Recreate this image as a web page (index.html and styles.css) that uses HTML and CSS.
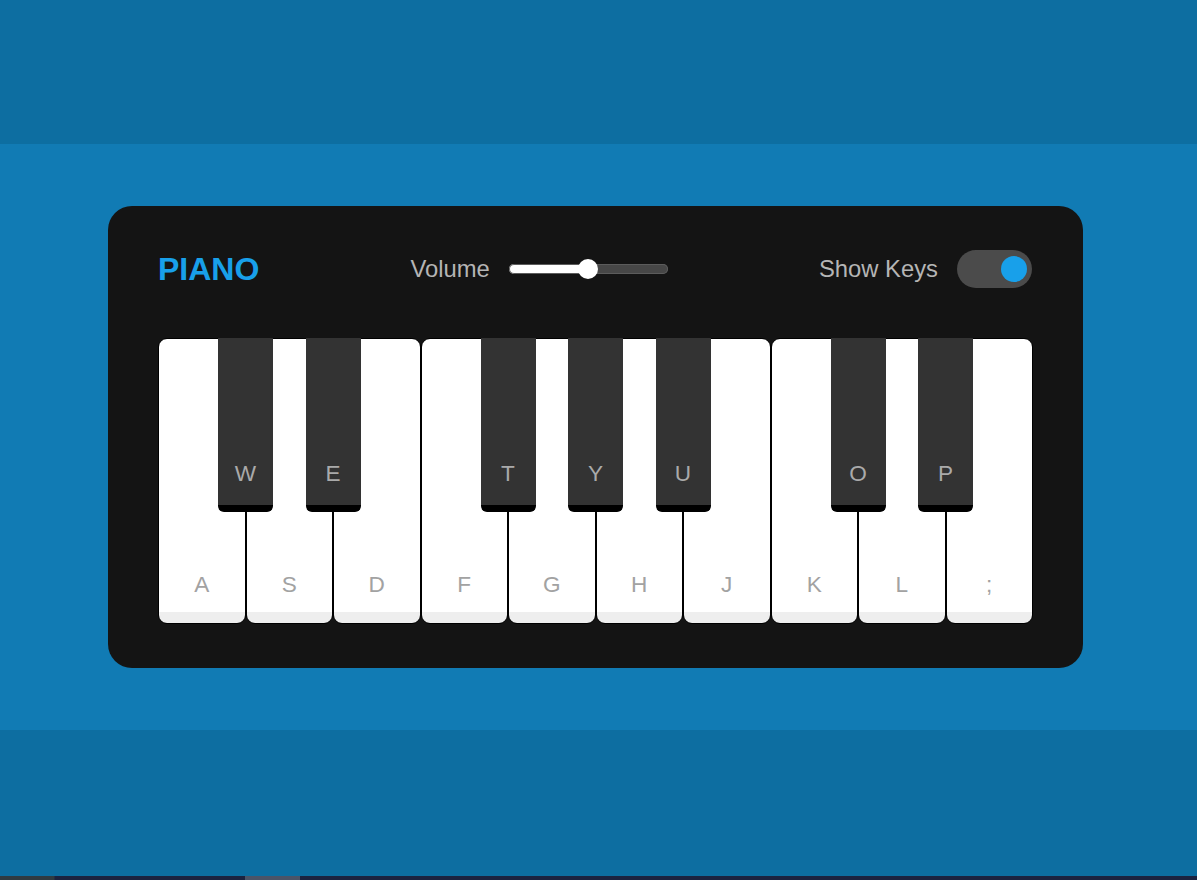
FILE: index.html
```html
<!DOCTYPE html>
<html lang="en">
<head>
<meta charset="utf-8">
<title>Piano</title>
<link rel="stylesheet" href="styles.css">
</head>
<body>
  <div class="band band-top"></div>
  <main class="stage">
    <section class="wrapper">
      <header class="header">
        <h2 class="title">PIANO</h2>
        <div class="column volume-slider">
          <span class="label">Volume</span>
          <input class="range" type="range" min="0" max="1" value="0.5" step="any">
        </div>
        <div class="column keys-checkbox">
          <span class="label">Show Keys</span>
          <input class="toggle" type="checkbox" checked>
        </div>
      </header>
      <ul class="piano-keys">
        <li class="key white"><span>A</span></li>
        <li class="key black"><span>W</span></li>
        <li class="key white"><span>S</span></li>
        <li class="key black"><span>E</span></li>
        <li class="key white"><span>D</span></li>
        <li class="key white"><span>F</span></li>
        <li class="key black"><span>T</span></li>
        <li class="key white"><span>G</span></li>
        <li class="key black"><span>Y</span></li>
        <li class="key white"><span>H</span></li>
        <li class="key black"><span>U</span></li>
        <li class="key white"><span>J</span></li>
        <li class="key white"><span>K</span></li>
        <li class="key black"><span>O</span></li>
        <li class="key white"><span>L</span></li>
        <li class="key black"><span>P</span></li>
        <li class="key white"><span>;</span></li>
      </ul>
    </section>
  </main>
  <div class="band band-bottom"></div>
  <div class="taskbar"></div>
</body>
</html>
```

FILE: styles.css
```css
* {
  box-sizing: border-box;
}

html, body {
  margin: 0;
  padding: 0;
}

body {
  width: 1197px;
  height: 880px;
  overflow: hidden;
  font-family: "Liberation Sans", Arial, sans-serif;
  background: #0d6ea1;
}

.band {
  background: #0d6ea1;
}

.band-top {
  height: 144px;
}

.band-bottom {
  height: 146px;
}

.taskbar {
  height: 4px;
  background: linear-gradient(to right,
    #2f3b42 0, #2f3b42 54px,
    #1b2340 55px, #1b2340 245px,
    #4a5468 245px, #4a5468 300px,
    #1b2340 300px, #1b2340 100%);
}

.stage {
  height: 586px;
  background: #117bb4;
  display: flex;
  align-items: center;
  justify-content: center;
  padding-right: 6px;
}

.wrapper {
  width: 975px;
  padding: 44px 50px 44px 50px;
  border-radius: 24px;
  background: #141414;
}

.header {
  height: 38px;
  padding: 0 1px;
  display: flex;
  align-items: center;
  justify-content: space-between;
  color: #b2b2b2;
}

.title {
  margin: 0 0 0 -1px;
  font-size: 32px;
  font-weight: 700;
  color: #18a0ea;
  line-height: 1;
}

.column {
  display: flex;
  align-items: center;
}

.label {
  font-size: 23.8px;
  margin-right: 19px;
  color: #b5b5b5;
}

.range {
  -webkit-appearance: none;
  appearance: none;
  margin: 0;
  width: 159px;
  height: 10px;
  border-radius: 6px;
  background: linear-gradient(to right, #fff 50%, #474747 50%);
  box-shadow: inset 0 0 0 1px #5c5c5c;
  outline: none;
}

.range::-webkit-slider-thumb {
  -webkit-appearance: none;
  appearance: none;
  width: 20px;
  height: 20px;
  border-radius: 50%;
  background: #fff;
  border: none;
}

.toggle {
  -webkit-appearance: none;
  appearance: none;
  margin: 0;
  width: 75px;
  height: 38px;
  border-radius: 38px;
  background: #4b4b4b;
  position: relative;
  outline: none;
}

.toggle::before {
  content: "";
  position: absolute;
  left: 44px;
  top: 50%;
  width: 26px;
  height: 26px;
  border-radius: 50%;
  background: #18a0ea;
  transform: translateY(-50%);
}

.piano-keys {
  list-style: none;
  margin: 50px 0 0 0;
  padding: 0;
  display: flex;
  height: 286px;
}

.key {
  display: flex;
  flex-direction: column;
  justify-content: flex-end;
  align-items: center;
  font-size: 22.6px;
  line-height: 26px;
  color: #a2a2a2;
}

.key.white {
  flex: 1 1 0;
  height: 286px;
  border: 1px solid #000;
  border-radius: 9px;
  background: linear-gradient(#fff 96%, #eee 4%);
  padding-bottom: 25px;
}

.key.black {
  flex: none;
  width: 55px;
  height: 174px;
  margin: 0 -27.5px;
  position: relative;
  z-index: 2;
  border-radius: 0 0 6px 6px;
  background: linear-gradient(#333 96%, #000 4%);
  padding-bottom: 25px;
  color: #aaaaaa;
}
```
